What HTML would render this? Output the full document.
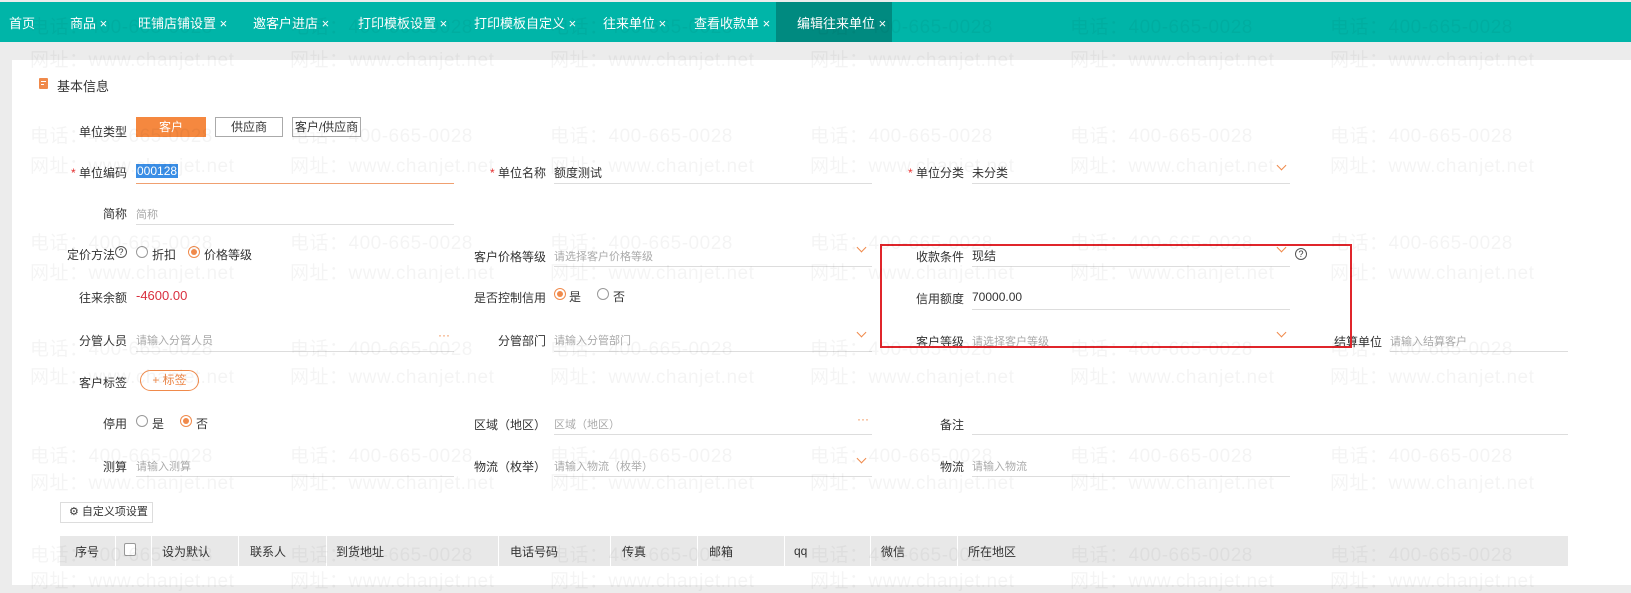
<!DOCTYPE html>
<html><head><meta charset="utf-8"><style>
*{margin:0;padding:0;box-sizing:border-box}
body{width:1631px;height:585px;overflow:hidden;background:#ececec;font-family:"Liberation Sans","Noto Sans CJK SC",sans-serif;font-size:12px;color:#333;position:relative}
.a{position:absolute;white-space:nowrap}
.nav{position:absolute;left:0;top:2px;width:1631px;height:40px;background:#00b5a8}
.nav span{position:absolute;top:11px;color:#fff;font-size:13px}
.card{position:absolute;left:12px;top:60px;width:1619px;height:525px;background:#fff}
.lab{position:absolute;text-align:right;font-size:12px;color:#333}
.ul{position:absolute;height:1px;background:#ddd}
.ph{color:#aaa;font-size:11px}
.st{color:#e33}
.chev{position:absolute;width:7px;height:7px;border-right:1px solid #f08a4b;border-bottom:1px solid #f08a4b;transform:rotate(45deg)}
.rad{position:absolute;width:12px;height:12px;border:1px solid #999;border-radius:50%}
.rad.on{border-color:#f08a4b}
.rad.on:after{content:"";position:absolute;left:2px;top:2px;width:6px;height:6px;border-radius:50%;background:#f08a4b}
.wm{position:absolute;font-size:19px;color:rgba(0,0,0,0.045);white-space:nowrap;pointer-events:none;letter-spacing:.5px}
</style></head><body>
<div class="nav">
<span style="left:9px">首页</span>
<span style="left:70px">商品 ×</span>
<span style="left:138px">旺铺店铺设置 ×</span>
<span style="left:253px">邀客户进店 ×</span>
<span style="left:358px">打印模板设置 ×</span>
<span style="left:474px">打印模板自定义 ×</span>
<span style="left:603px">往来单位 ×</span>
<span style="left:694px">查看收款单 ×</span>
<div style="position:absolute;left:776px;top:0;width:116px;height:40px;background:#008a80"></div>
<span style="left:797px">编辑往来单位 ×</span>
</div>
<div class="card"></div>

<div class="a" style="left:39px;top:78px;width:9px;height:11px;background:#f08a4b;border-radius:1px"></div>
<div class="a" style="left:41px;top:81px;width:5px;height:1px;background:#fff"></div>
<div class="a" style="left:41px;top:84px;width:3px;height:1px;background:#fff"></div>
<div class="a" style="left:57px;top:76px;font-size:13px">基本信息</div>

<div class="lab" style="left:60px;top:123px;width:67px">单位类型</div>
<div class="a" style="left:136px;top:117px;width:70px;height:20px;background:#f5883f;color:#fff;text-align:center;line-height:20px">客户</div>
<div class="a" style="left:215px;top:117px;width:68px;height:20px;border:1px solid #aaa;text-align:center;line-height:18px">供应商</div>
<div class="a" style="left:292px;top:117px;width:69px;height:20px;border:1px solid #aaa;text-align:center;line-height:18px">客户/供应商</div>

<div class="lab" style="left:60px;top:164px;width:67px"><span class="st">* </span>单位编码</div>
<div class="a" style="left:136px;top:164px;background:#3a8ee6;color:#fff;padding:0 1px">000128</div>
<div class="ul" style="left:136px;top:183px;width:318px;background:#f0a070"></div>
<div class="lab" style="left:470px;top:164px;width:76px"><span class="st">* </span>单位名称</div>
<div class="a" style="left:554px;top:164px">额度测试</div>
<div class="ul" style="left:554px;top:183px;width:318px"></div>
<div class="lab" style="left:890px;top:164px;width:74px"><span class="st">* </span>单位分类</div>
<div class="a" style="left:972px;top:164px">未分类</div>
<div class="chev" style="left:1278px;top:162px"></div>
<div class="ul" style="left:972px;top:183px;width:318px"></div>

<div class="lab" style="left:60px;top:205px;width:67px">简称</div>
<div class="a ph" style="left:136px;top:206px">简称</div>
<div class="ul" style="left:136px;top:224px;width:318px"></div>

<div class="lab" style="left:40px;top:246px;width:75px">定价方法</div>
<div class="a" style="left:115px;top:246px;width:12px;height:12px;border:1px solid #555;border-radius:50%;font-size:9px;text-align:center;line-height:10px">?</div>
<div class="rad" style="left:136px;top:246px"></div><div class="a" style="left:152px;top:246px">折扣</div>
<div class="rad on" style="left:188px;top:246px"></div><div class="a" style="left:204px;top:246px">价格等级</div>
<div class="lab" style="left:460px;top:248px;width:86px">客户价格等级</div>
<div class="a ph" style="left:554px;top:248px">请选择客户价格等级</div>
<div class="chev" style="left:858px;top:244px"></div>
<div class="ul" style="left:554px;top:266px;width:318px"></div>
<div class="lab" style="left:890px;top:248px;width:74px">收款条件</div>
<div class="a" style="left:972px;top:247px">现结</div>
<div class="chev" style="left:1278px;top:244px"></div>
<div class="ul" style="left:972px;top:266px;width:318px"></div>
<div class="a" style="left:1295px;top:248px;width:12px;height:12px;border:1px solid #555;border-radius:50%;font-size:9px;text-align:center;line-height:10px">?</div>

<div class="lab" style="left:60px;top:289px;width:67px">往来余额</div>
<div class="a" style="left:136px;top:288px;color:#d9303f;font-size:13px">-4600.00</div>
<div class="lab" style="left:460px;top:289px;width:86px">是否控制信用</div>
<div class="rad on" style="left:554px;top:288px"></div><div class="a" style="left:569px;top:288px">是</div>
<div class="rad" style="left:597px;top:288px"></div><div class="a" style="left:613px;top:288px">否</div>
<div class="lab" style="left:890px;top:290px;width:74px">信用额度</div>
<div class="a" style="left:972px;top:290px">70000.00</div>
<div class="ul" style="left:972px;top:309px;width:318px"></div>

<div class="lab" style="left:60px;top:332px;width:67px">分管人员</div>
<div class="a ph" style="left:136px;top:332px">请输入分管人员</div>
<div class="a" style="left:438px;top:328px;color:#f08a4b">···</div>
<div class="ul" style="left:136px;top:351px;width:318px"></div>
<div class="lab" style="left:470px;top:332px;width:76px">分管部门</div>
<div class="a ph" style="left:554px;top:332px">请输入分管部门</div>
<div class="chev" style="left:858px;top:329px"></div>
<div class="ul" style="left:554px;top:351px;width:318px"></div>
<div class="lab" style="left:890px;top:333px;width:74px">客户等级</div>
<div class="a ph" style="left:972px;top:333px">请选择客户等级</div>
<div class="chev" style="left:1278px;top:329px"></div>
<div class="lab" style="left:1310px;top:333px;width:72px">结算单位</div>
<div class="a ph" style="left:1390px;top:333px">请输入结算客户</div>
<div class="ul" style="left:1390px;top:351px;width:178px"></div>
<div class="a" style="left:880px;top:244px;width:472px;height:104px;border:2px solid #e0252b"></div>

<div class="lab" style="left:60px;top:374px;width:67px">客户标签</div>
<div class="a" style="left:140px;top:370px;width:59px;height:21px;border:1px solid #f08a4b;border-radius:11px;color:#f08a4b;text-align:center;line-height:19px">+ 标签</div>

<div class="lab" style="left:60px;top:415px;width:67px">停用</div>
<div class="rad" style="left:136px;top:415px"></div><div class="a" style="left:152px;top:415px">是</div>
<div class="rad on" style="left:180px;top:415px"></div><div class="a" style="left:196px;top:415px">否</div>
<div class="lab" style="left:460px;top:416px;width:86px">区域（地区）</div>
<div class="a ph" style="left:554px;top:416px">区域（地区）</div>
<div class="a" style="left:857px;top:412px;color:#f08a4b">···</div>
<div class="ul" style="left:554px;top:434px;width:318px"></div>
<div class="lab" style="left:890px;top:416px;width:74px">备注</div>
<div class="ul" style="left:972px;top:434px;width:596px"></div>

<div class="lab" style="left:60px;top:458px;width:67px">测算</div>
<div class="a ph" style="left:136px;top:458px">请输入测算</div>
<div class="ul" style="left:136px;top:476px;width:318px"></div>
<div class="lab" style="left:460px;top:458px;width:86px">物流（枚举）</div>
<div class="a ph" style="left:554px;top:458px">请输入物流（枚举）</div>
<div class="chev" style="left:858px;top:455px"></div>
<div class="ul" style="left:554px;top:476px;width:318px"></div>
<div class="lab" style="left:890px;top:458px;width:74px">物流</div>
<div class="a ph" style="left:972px;top:458px">请输入物流</div>
<div class="ul" style="left:972px;top:476px;width:318px"></div>

<div class="a" style="left:60px;top:502px;width:93px;height:21px;border:1px solid #ddd;font-size:11px;line-height:19px;padding-left:8px">⚙ 自定义项设置</div>

<div class="a" style="left:60px;top:536px;width:1508px;height:30px;background:#e8e8e8"></div>
<div class="a" style="left:75px;top:543px">序号</div>
<div class="a" style="left:124px;top:543px;width:12px;height:13px;border:1px solid #999;background:#fff;border-radius:2px"></div>
<div class="a" style="left:162px;top:543px">设为默认</div>
<div class="a" style="left:250px;top:543px">联系人</div>
<div class="a" style="left:336px;top:543px">到货地址</div>
<div class="a" style="left:510px;top:543px">电话号码</div>
<div class="a" style="left:622px;top:543px">传真</div>
<div class="a" style="left:709px;top:543px">邮箱</div>
<div class="a" style="left:794px;top:544px">qq</div>
<div class="a" style="left:881px;top:543px">微信</div>
<div class="a" style="left:968px;top:543px">所在地区</div>
<div class="a" style="left:115px;top:536px;width:1px;height:30px;background:#fff"></div>
<div class="a" style="left:151px;top:536px;width:1px;height:30px;background:#fff"></div>
<div class="a" style="left:238px;top:536px;width:1px;height:30px;background:#fff"></div>
<div class="a" style="left:326px;top:536px;width:1px;height:30px;background:#fff"></div>
<div class="a" style="left:498px;top:536px;width:1px;height:30px;background:#fff"></div>
<div class="a" style="left:610px;top:536px;width:1px;height:30px;background:#fff"></div>
<div class="a" style="left:697px;top:536px;width:1px;height:30px;background:#fff"></div>
<div class="a" style="left:784px;top:536px;width:1px;height:30px;background:#fff"></div>
<div class="a" style="left:870px;top:536px;width:1px;height:30px;background:#fff"></div>
<div class="a" style="left:957px;top:536px;width:1px;height:30px;background:#fff"></div>

<div id="wm"></div>
<script>
var h='',xs=[30,290,550,810,1070,1330],ps=[12,121,228,334,441,540],ws=[45,151,258,362,468,566];
xs.forEach(function(x){ps.forEach(function(y){h+='<div class="wm" style="left:'+x+'px;top:'+y+'px">电话：400-665-0028</div>'});ws.forEach(function(y){h+='<div class="wm" style="left:'+x+'px;top:'+y+'px">网址：www.chanjet.net</div>'})});
document.getElementById('wm').innerHTML=h;
</script>
</body></html>
